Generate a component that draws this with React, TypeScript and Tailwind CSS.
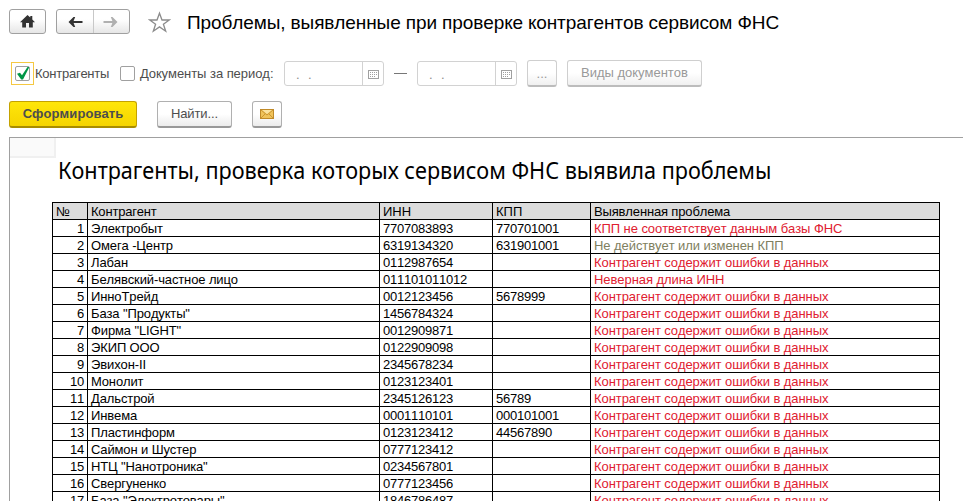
import React from "react";

type Row = { name: string; inn: string; kpp?: string; problem?: string; muted?: boolean };

const DATA_ERROR = "Контрагент содержит ошибки в данных";

const rows: Row[] = [
  { name: "Электробыт", inn: "7707083893", kpp: "770701001", problem: "КПП не соответствует данным базы ФНС" },
  { name: "Омега -Центр", inn: "6319134320", kpp: "631901001", problem: "Не действует или изменен КПП", muted: true },
  { name: "Лабан", inn: "0112987654" },
  { name: "Белявский-частное лицо", inn: "011101011012", problem: "Неверная длина ИНН" },
  { name: "ИнноТрейд", inn: "0012123456", kpp: "5678999" },
  { name: 'База "Продукты"', inn: "1456784324" },
  { name: 'Фирма "LIGHT"', inn: "0012909871" },
  { name: "ЭКИП ООО", inn: "0122909098" },
  { name: "Эвихон-II", inn: "2345678234" },
  { name: "Монолит", inn: "0123123401" },
  { name: "Дальстрой", inn: "2345126123", kpp: "56789" },
  { name: "Инвема", inn: "0001110101", kpp: "000101001" },
  { name: "Пластинформ", inn: "0123123412", kpp: "44567890" },
  { name: "Саймон и Шустер", inn: "0777123412" },
  { name: 'НТЦ "Нанотроника"', inn: "0234567801" },
  { name: "Свергуненко", inn: "0777123456" },
  { name: 'База "Электротовары"', inn: "1846786487" },
];

const grid = "grid grid-cols-[35px_292px_113px_98px_349px]";
const cell = "h-[17px] border-r border-b border-black pl-[3px] leading-[17px] whitespace-nowrap";

function DateField() {
  return (
    <div className="flex h-[25px] w-[100px] rounded-[3px] border border-[#d2d2d2] bg-white">
      <div className="flex-1 pl-[11px] text-[13px] leading-[25px] tracking-[0.4px] whitespace-pre text-[#8c8c8c]">{".  ."}</div>
      <div className="flex w-[21px] items-center justify-center border-l border-[#d2d2d2] pt-[2px]">
        <svg width="11" height="9" shapeRendering="crispEdges">
          <rect x="0.5" y="0.5" width="10" height="8" fill="#fff" stroke="#a0a0a0" />
          <path d="M2 2.5H9M2 4.5H9M2 6.5H7" stroke="#a0a0a0" strokeDasharray="1 1" />
        </svg>
      </div>
    </div>
  );
}

export default function App() {
  return (
    <div className="h-[501px] w-[963px] overflow-hidden bg-white font-['Liberation_Sans',Arial,sans-serif] text-[13px] text-[#4d4d4d] [font-kerning:none]">
      <header className="flex h-[34px] items-start pt-[9px] pl-[9px]">
        <button className="flex h-[25px] w-[37px] items-center justify-center rounded-[3px] border border-[#a0a0a0] bg-linear-to-b from-white from-40% to-[#e6e6e6]">
          <svg width="15" height="13" viewBox="0 0 15 13" fill="#333">
            <path d="M7.5 0 10.3 2.6V1H12.3V4.4L15 7.2H12.8V12.5H9V8H6V12.5H2.2V7.2H0Z" />
          </svg>
        </button>
        <div className="ml-[10px] flex h-[25px] w-[74px] rounded-[3px] border border-[#a0a0a0] bg-linear-to-b from-white from-40% to-[#e6e6e6]">
          <div className="flex w-[37px] items-center justify-center border-r border-[#c8c8c8]">
            <svg width="15" height="12" viewBox="0 0 15 12" fill="#333">
              <path d="M0.5 6 5.5 1H7.2L5.6 5H14.5V7H5.6L7.2 11H5.5Z" />
            </svg>
          </div>
          <div className="flex flex-1 items-center justify-center pr-[3px]">
            <svg width="15" height="12" viewBox="0 0 15 12" fill="#b0b0b0">
              <path d="M14.5 6 9.5 1H7.8L9.4 5H0.5V7H9.4L7.8 11H9.5Z" />
            </svg>
          </div>
        </div>
        <svg className="mt-[2px] ml-[18px]" width="23" height="22" viewBox="0 0 23 22" fill="none" stroke="#8c8c8c" strokeWidth="1.3">
          <path d="M11.5 2.2 14 9H21.2L15.4 13.2 17.7 20.2 11.5 15.9 5.3 20.2 7.6 13.2 1.8 9H9Z" />
        </svg>
        <h1 className="ml-[16px] text-[19px] leading-[27px] tracking-[-0.1px] whitespace-nowrap text-black">
          Проблемы, выявленные при проверке контрагентов сервисом ФНС
        </h1>
      </header>

      <div className="mt-[26px] flex h-[27px] items-center pl-[11px]">
        <div className="flex h-[23px] w-[23px] items-center justify-center border border-[#f5c842]">
          <div className="h-[15px] w-[15px] rounded-[2px] border border-[#a0a0a0]">
            <svg width="13" height="13" viewBox="0 0 13 13" fill="#009646">
              <path d="M1 6.8 4 5.8 6 8.3 11.5 0H13.4L7 12.4H5.2Z" />
            </svg>
          </div>
        </div>
        <span className="ml-px w-[85px] tracking-[-0.25px] whitespace-nowrap">Контрагенты</span>
        <div className="h-[15px] w-[15px] rounded-[2px] border border-[#a0a0a0]" />
        <span className="ml-[5px] w-[144px] tracking-[-0.05px] whitespace-nowrap">Документы за период:</span>
        <DateField />
        <div className="mx-[10px] h-px w-[13px] bg-[#777]" />
        <DateField />
        <button className="ml-[10px] h-[27px] w-[30px] rounded-[3px] border border-b-2 border-[#cfcfcf] border-b-[#bcbcbc] bg-linear-to-b from-white from-50% to-[#f0f0f0] pt-[2px] text-[#999]">...</button>
        <button className="ml-[10px] h-[27px] w-[135px] rounded-[3px] border border-b-2 border-[#cfcfcf] border-b-[#bcbcbc] bg-linear-to-b from-white from-50% to-[#f0f0f0] whitespace-nowrap text-[#999]">Виды документов</button>
      </div>

      <div className="mt-[14px] flex h-[27px] pl-[9px]">
        <button className="h-[27px] w-[128px] rounded-[3px] border border-b-2 border-[#c4a200] border-b-[#a88c00] bg-linear-to-b from-[#ffe60a] to-[#f5d400] font-bold tracking-[0.08px] whitespace-nowrap">Сформировать</button>
        <button className="ml-[20px] h-[27px] w-[75px] rounded-[3px] border border-b-2 border-[#b0b0b0] border-b-[#999] bg-linear-to-b from-white from-50% to-[#ececec] tracking-[-0.1px] whitespace-nowrap">Найти...</button>
        <button className="ml-[20px] flex h-[27px] w-[30px] items-center justify-center rounded-[3px] border border-b-2 border-[#b0b0b0] border-b-[#999] bg-linear-to-b from-white from-50% to-[#ececec]">
          <svg width="14" height="10" viewBox="0 0 14 10">
            <rect x="0.5" y="0.5" width="13" height="9" fill="#f0c35a" stroke="#c08a28" />
            <path d="M2 1H12L7 5Z" fill="#fbe3a0" />
            <path d="M1 1 7 6 13 1M1 9 5 5M13 9 9 5" fill="none" stroke="#c08a28" strokeWidth="0.8" />
          </svg>
        </button>
      </div>

      <main className="mt-[9px] ml-[9px] h-[364px] border-t border-l border-[#a0a0a0] text-black">
        <div className="h-[20px] w-[46px] border-r-2 border-b-2 border-[#f0f0f0] bg-[#fafafa]" />
        <h2 className="-mt-[2px] ml-[48px] h-[46px] w-max origin-left scale-x-[0.901] font-['Noto_Sans','Open_Sans',sans-serif] text-[24px] leading-[28px] whitespace-nowrap">
          Контрагенты, проверка которых сервисом ФНС выявила проблемы
        </h2>
        <div className="ml-[42px] w-[888px] border-t border-l border-black">
          <div className={`${grid} bg-[#dcdcdc]`}>
            <div className={cell}>№</div>
            <div className={`${cell} tracking-[-0.2px]`}>Контрагент</div>
            <div className={cell}>ИНН</div>
            <div className={cell}>КПП</div>
            <div className={`${cell} tracking-[-0.15px]`}>Выявленная проблема</div>
          </div>
          {rows.map((r, i) => (
            <div key={r.name} className={grid}>
              <div className={`${cell} pr-[3px] text-right tracking-[-0.23px]`}>{i + 1}</div>
              <div className={`${cell} tracking-[-0.12px]`}>{r.name}</div>
              <div className={`${cell} tracking-[-0.23px]`}>{r.inn}</div>
              <div className={`${cell} tracking-[-0.23px]`}>{r.kpp}</div>
              <div className={`${cell} tracking-[-0.07px] ${r.muted ? "text-[#808060]" : "text-[#e02030]"}`}>{r.problem ?? DATA_ERROR}</div>
            </div>
          ))}
        </div>
      </main>
    </div>
  );
}
